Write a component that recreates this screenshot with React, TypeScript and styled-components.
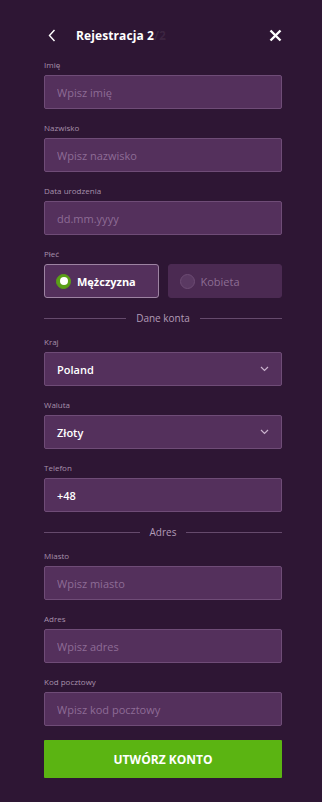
import React, { useState } from 'react';
import styled, { createGlobalStyle } from 'styled-components';

const GlobalStyle = createGlobalStyle`
  html, body {
    margin: 0;
    padding: 0;
    background: #2e1634;
  }
  * {
    box-sizing: border-box;
  }
`;

const Page = styled.div`
  width: 322px;
  min-height: 802px;
  background: #2e1634;
  padding: 22px 40px 0 44px;
  font-family: 'Open Sans', 'Noto Sans', sans-serif;
  color: #fff;
`;

const Header = styled.div`
  display: flex;
  align-items: center;
  height: 26px;
  padding-left: 4px;
`;

const IconButton = styled.button`
  display: flex;
  align-items: center;
  justify-content: center;
  background: none;
  border: none;
  padding: 0;
  cursor: pointer;
  color: #fff;
`;

const Title = styled.div`
  flex: 1;
  margin-left: 20px;
  font-size: 12px;
  font-weight: 700;
  letter-spacing: 0.1px;
`;

const TitleFade = styled.span`
  color: rgba(255, 255, 255, 0.08);
`;

const Form = styled.form`
  display: flex;
  flex-direction: column;
  margin-top: 11px;
`;

const Field = styled.div`
  display: flex;
  flex-direction: column;
  margin-bottom: 13px;
`;

const Label = styled.div`
  font-size: 8px;
  line-height: 12px;
  height: 12px;
  color: #a790ab;
  margin-bottom: 4px;
`;

const Input = styled.input<{ $filled?: boolean }>`
  height: 34px;
  width: 100%;
  padding: 0 12px;
  background: #54305c;
  border: 1px solid #6f4c77;
  border-radius: 2px;
  font-family: inherit;
  font-size: 11px;
  font-weight: ${({ $filled }) => ($filled ? 600 : 400)};
  color: #fff;
  outline: none;
  &::placeholder {
    color: #8e6c96;
  }
`;

const SelectBox = styled.div`
  position: relative;
  display: flex;
  align-items: center;
  justify-content: space-between;
  height: 34px;
  padding: 0 12px;
  background: #54305c;
  border: 1px solid #6f4c77;
  border-radius: 2px;
  font-size: 11px;
  font-weight: 600;
  color: #fff;
`;

const GenderRow = styled.div`
  display: grid;
  grid-template-columns: 1fr 1fr;
  gap: 9px;
`;

const GenderOption = styled.button<{ $active: boolean }>`
  display: flex;
  align-items: center;
  gap: 6px;
  height: 34px;
  padding: 0 11px;
  background: ${({ $active }) => ($active ? '#54305c' : '#4b2a52')};
  border: 1px solid ${({ $active }) => ($active ? '#9d83a2' : '#4b2a52')};
  border-radius: 3px;
  font-family: inherit;
  font-size: 11px;
  font-weight: ${({ $active }) => ($active ? 700 : 400)};
  color: ${({ $active }) => ($active ? '#fff' : '#8d6e94')};
  cursor: pointer;
`;

const Radio = styled.span<{ $active: boolean }>`
  width: 15px;
  height: 15px;
  border-radius: 50%;
  flex-shrink: 0;
  display: flex;
  align-items: center;
  justify-content: center;
  background: ${({ $active }) => ($active ? '#5a9f17' : '#5a3962')};
  border: 1px solid ${({ $active }) => ($active ? '#5a9f17' : '#6d4c74')};
  &::after {
    content: '';
    display: ${({ $active }) => ($active ? 'block' : 'none')};
    width: 8px;
    height: 8px;
    border-radius: 50%;
    background: #fff;
  }
`;

const Divider = styled.div`
  display: flex;
  align-items: center;
  gap: 10px;
  height: 14px;
  margin-top: 0;
  margin-bottom: 11px;
  font-size: 10px;
  color: #b29bb7;
  &::before,
  &::after {
    content: '';
    flex: 1;
    height: 1px;
    background: #654a6c;
  }
`;

const SubmitButton = styled.button`
  height: 38px;
  margin-top: 1px;
  background: #5bb412;
  border: none;
  border-radius: 1px;
  font-family: inherit;
  font-size: 12px;
  font-weight: 700;
  color: #fff;
  cursor: pointer;
`;

const Chevron = () => (
  <svg width="9" height="6" viewBox="0 0 9 6" fill="none">
    <path d="M1 1l3.5 3.5L8 1" stroke="#c9b2cd" strokeWidth="1.2" />
  </svg>
);

const App = () => {
  const [gender, setGender] = useState<'m' | 'k'>('m');

  return (
    <>
      <GlobalStyle />
      <Page>
        <Header>
          <IconButton>
            <svg width="8" height="13" viewBox="0 0 8 13" fill="none">
              <path d="M6.5 1L1.5 6.5l5 5.5" stroke="#fff" strokeWidth="1.4" />
            </svg>
          </IconButton>
          <Title>
            Rejestracja 2<TitleFade>/2</TitleFade>
          </Title>
          <IconButton>
            <svg width="13" height="13" viewBox="0 0 13 13" fill="none">
              <path d="M1.5 1.5l10 10M11.5 1.5l-10 10" stroke="#fff" strokeWidth="2.4" />
            </svg>
          </IconButton>
        </Header>

        <Form onSubmit={(e) => e.preventDefault()}>
          <Field>
            <Label>Imię</Label>
            <Input placeholder="Wpisz imię" />
          </Field>
          <Field>
            <Label>Nazwisko</Label>
            <Input placeholder="Wpisz nazwisko" />
          </Field>
          <Field>
            <Label>Data urodzenia</Label>
            <Input placeholder="dd.mm.yyyy" />
          </Field>
          <Field>
            <Label>Płeć</Label>
            <GenderRow>
              <GenderOption type="button" $active={gender === 'm'} onClick={() => setGender('m')}>
                <Radio $active={gender === 'm'} />
                Mężczyzna
              </GenderOption>
              <GenderOption type="button" $active={gender === 'k'} onClick={() => setGender('k')}>
                <Radio $active={gender === 'k'} />
                Kobieta
              </GenderOption>
            </GenderRow>
          </Field>

          <Divider>Dane konta</Divider>

          <Field>
            <Label>Kraj</Label>
            <SelectBox>
              Poland
              <Chevron />
            </SelectBox>
          </Field>
          <Field>
            <Label>Waluta</Label>
            <SelectBox>
              Złoty
              <Chevron />
            </SelectBox>
          </Field>
          <Field>
            <Label>Telefon</Label>
            <Input $filled defaultValue="+48" />
          </Field>

          <Divider>Adres</Divider>

          <Field>
            <Label>Miasto</Label>
            <Input placeholder="Wpisz miasto" />
          </Field>
          <Field>
            <Label>Adres</Label>
            <Input placeholder="Wpisz adres" />
          </Field>
          <Field>
            <Label>Kod pocztowy</Label>
            <Input placeholder="Wpisz kod pocztowy" />
          </Field>

          <SubmitButton type="submit">UTWÓRZ KONTO</SubmitButton>
        </Form>
      </Page>
    </>
  );
};

export default App;
